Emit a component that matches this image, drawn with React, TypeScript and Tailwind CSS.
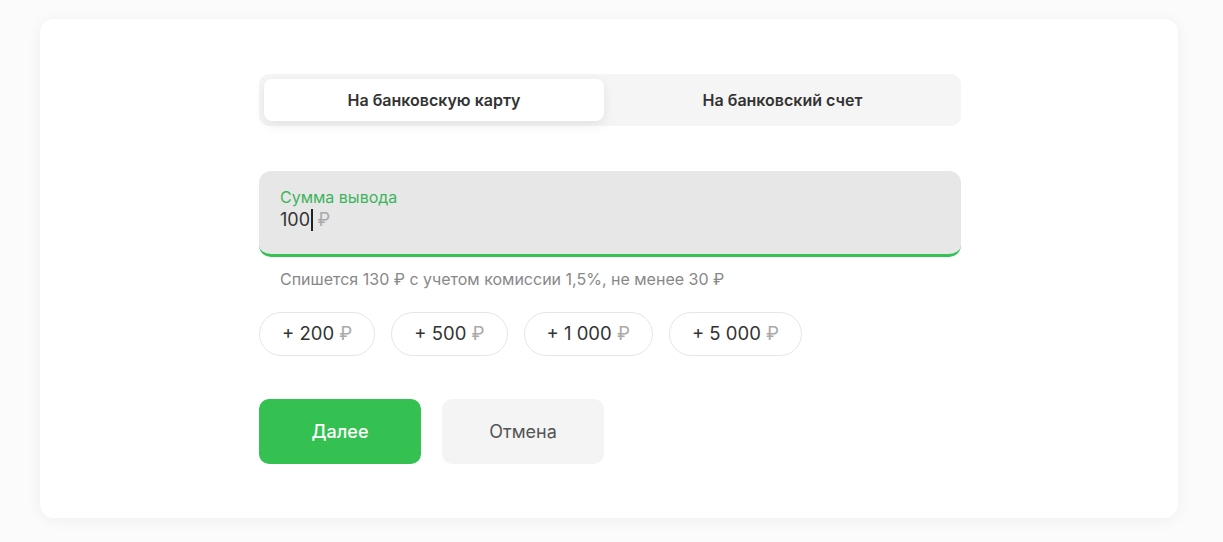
import { useState } from 'react';

const CHIPS = ['200', '500', '1 000', '5 000'];

/** Withdrawal form: destination tabs, amount field, quick add chips, actions. */
export default function App() {
  const [tab, setTab] = useState(0);

  return (
    <div className="min-h-[542px] bg-[#fbfbfb] pl-[40px] pt-[19px] pb-[24px] font-['Inter',sans-serif]">
      <div className="flex h-[499px] w-[1138px] justify-center rounded-[14px] bg-white pl-[2px] pt-[55px] shadow-[0_2px_16px_rgba(0,0,0,0.05)]">
        <div className="w-[702px]">
          {/* Tabs */}
          <div className="flex h-[52px] rounded-[10px] bg-[#f5f5f5] py-[5px] pl-[5px]">
            {['На банковскую карту', 'На банковский счет'].map((label, i) => (
              <button
                key={label}
                onClick={() => setTab(i)}
                className={`rounded-[8px] text-[16px] font-semibold text-[#333] ${
                  i === 0 ? 'w-[340px]' : 'flex-1'
                } ${tab === i ? 'bg-white shadow-[0_4px_12px_rgba(0,0,0,0.08)]' : ''}`}
              >
                {label}
              </button>
            ))}
          </div>

          {/* Amount field */}
          <div className="mt-[45px] h-[86px] rounded-[12px] border-b-[3px] border-[#34c253] bg-[#e8e7e8] px-[21px] pt-[16px]">
            <div className="text-[16px] leading-[20px] text-[#3cb55a]">Сумма вывода</div>
            <div className="flex items-center text-[18px] leading-[26px] text-[#333]">
              100
              <span className="ml-[1px] h-[22px] w-[1.5px] bg-[#222]" />
              <span className="ml-[5px] text-[#aaa]">₽</span>
            </div>
          </div>

          <p className="mt-[12px] px-[21px] text-[16px] leading-[20px] text-[#888]">
            Спишется 130 ₽ с учетом комиссии 1,5%, не менее 30 ₽
          </p>

          {/* Quick add chips */}
          <div className="mt-[23px] flex gap-[16px]">
            {CHIPS.map((v) => (
              <button
                key={v}
                className="h-[44px] rounded-full border border-[#e6e6e6] bg-white px-[22px] text-[18.5px] text-[#333]"
              >
                + {v} <span className="text-[#aaa]">₽</span>
              </button>
            ))}
          </div>

          {/* Actions */}
          <div className="mt-[43px] flex gap-[21px]">
            <button className="h-[65px] w-[162px] rounded-[10px] bg-[#34c152] text-[18px] font-medium text-white">
              Далее
            </button>
            <button className="h-[65px] w-[162px] rounded-[10px] bg-[#f4f4f4] text-[18px] text-[#555]">
              Отмена
            </button>
          </div>
        </div>
      </div>
    </div>
  );
}
